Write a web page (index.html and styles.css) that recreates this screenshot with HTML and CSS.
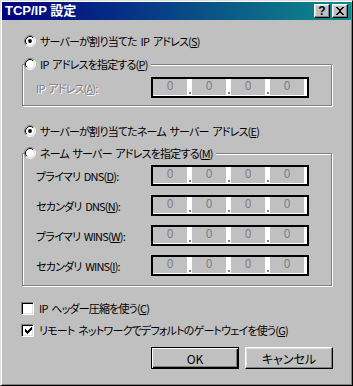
FILE: index.html
```html
<!DOCTYPE html>
<html lang="ja">
<head>
  <meta charset="UTF-8" />
  <title>TCP/IP 設定</title>
  <link rel="stylesheet" href="styles.css">
</head>
<body>
  <div class="dialog">
    <div class="titlebar">
      <span class="title">TCP/IP 設定</span>
      <div class="title-buttons">
        <span class="tbtn help">?</span>
        <span class="tbtn">
          <svg width="14" height="12" viewBox="0 0 14 12" shape-rendering="crispEdges">
            <path d="M3 2h2v1h1v1h2v-1h1v-1h2v1h-1v1h-1v1h-1v2h1v1h1v1h1v1h-2v-1h-1v-1h-2v1h-1v1h-2v-1h1v-1h1v-1h1v-2h-1v-1h-1v-1h-1z" fill="#000"/>
          </svg>
        </span>
      </div>
    </div>

    <div class="content">
      <div class="option">
        <svg class="radio" width="12" height="12" viewBox="0 0 12 12">
          <circle cx="6" cy="6" r="5" fill="#fff"/>
          <path d="M2.11 9.89A5.5 5.5 0 0 1 9.89 2.11" fill="none" stroke="#808080"/>
          <path d="M9.89 2.11A5.5 5.5 0 0 1 2.11 9.89" fill="none" stroke="#fff"/>
          <path d="M2.82 9.18A4.5 4.5 0 0 1 9.18 2.82" fill="none" stroke="#000"/>
          <path d="M9.18 2.82A4.5 4.5 0 0 1 2.82 9.18" fill="none" stroke="#dfdfdf"/>
          <circle cx="6" cy="6" r="1.9" fill="#000"/>
        </svg>
        <span>サーバーが割り当てた IP アドレス(<u>S</u>)</span>
      </div>

      <fieldset class="group group-ip">
        <legend class="option">
          <svg class="radio" width="12" height="12" viewBox="0 0 12 12">
            <circle cx="6" cy="6" r="5" fill="#fff"/>
            <path d="M2.11 9.89A5.5 5.5 0 0 1 9.89 2.11" fill="none" stroke="#808080"/>
            <path d="M9.89 2.11A5.5 5.5 0 0 1 2.11 9.89" fill="none" stroke="#fff"/>
            <path d="M2.82 9.18A4.5 4.5 0 0 1 9.18 2.82" fill="none" stroke="#000"/>
            <path d="M9.18 2.82A4.5 4.5 0 0 1 2.82 9.18" fill="none" stroke="#dfdfdf"/>
          </svg>
          <span>IP アドレスを指定する(<u>P</u>)</span>
        </legend>
        <div class="field-row">
          <span class="label disabled">IP アドレス(<u>A</u>):</span>
          <div class="ipbox"><span class="seg">0</span><span class="dot"></span><span class="seg">0</span><span class="dot"></span><span class="seg">0</span><span class="dot"></span><span class="seg">0</span></div>
        </div>
      </fieldset>

      <div class="option option-dns">
        <svg class="radio" width="12" height="12" viewBox="0 0 12 12">
          <circle cx="6" cy="6" r="5" fill="#fff"/>
          <path d="M2.11 9.89A5.5 5.5 0 0 1 9.89 2.11" fill="none" stroke="#808080"/>
          <path d="M9.89 2.11A5.5 5.5 0 0 1 2.11 9.89" fill="none" stroke="#fff"/>
          <path d="M2.82 9.18A4.5 4.5 0 0 1 9.18 2.82" fill="none" stroke="#000"/>
          <path d="M9.18 2.82A4.5 4.5 0 0 1 2.82 9.18" fill="none" stroke="#dfdfdf"/>
          <circle cx="6" cy="6" r="1.9" fill="#000"/>
        </svg>
        <span>サーバーが割り当てたネーム サーバー アドレス(<u>E</u>)</span>
      </div>

      <fieldset class="group group-dns">
        <legend class="option">
          <svg class="radio" width="12" height="12" viewBox="0 0 12 12">
            <circle cx="6" cy="6" r="5" fill="#fff"/>
            <path d="M2.11 9.89A5.5 5.5 0 0 1 9.89 2.11" fill="none" stroke="#808080"/>
            <path d="M9.89 2.11A5.5 5.5 0 0 1 2.11 9.89" fill="none" stroke="#fff"/>
            <path d="M2.82 9.18A4.5 4.5 0 0 1 9.18 2.82" fill="none" stroke="#000"/>
            <path d="M9.18 2.82A4.5 4.5 0 0 1 2.82 9.18" fill="none" stroke="#dfdfdf"/>
          </svg>
          <span>ネーム サーバー アドレスを指定する(<u>M</u>)</span>
        </legend>
        <div class="field-row">
          <span class="label">プライマリ DNS(<u>D</u>):</span>
          <div class="ipbox"><span class="seg">0</span><span class="dot"></span><span class="seg">0</span><span class="dot"></span><span class="seg">0</span><span class="dot"></span><span class="seg">0</span></div>
        </div>
        <div class="field-row">
          <span class="label">セカンダリ DNS(<u>N</u>):</span>
          <div class="ipbox"><span class="seg">0</span><span class="dot"></span><span class="seg">0</span><span class="dot"></span><span class="seg">0</span><span class="dot"></span><span class="seg">0</span></div>
        </div>
        <div class="field-row">
          <span class="label">プライマリ WINS(<u>W</u>):</span>
          <div class="ipbox"><span class="seg">0</span><span class="dot"></span><span class="seg">0</span><span class="dot"></span><span class="seg">0</span><span class="dot"></span><span class="seg">0</span></div>
        </div>
        <div class="field-row">
          <span class="label">セカンダリ WINS(<u>I</u>):</span>
          <div class="ipbox"><span class="seg">0</span><span class="dot"></span><span class="seg">0</span><span class="dot"></span><span class="seg">0</span><span class="dot"></span><span class="seg">0</span></div>
        </div>
      </fieldset>

      <div class="check-row first">
        <span class="checkbox"></span>
        <span>IP ヘッダー圧縮を使う(<u>C</u>)</span>
      </div>
      <div class="check-row">
        <span class="checkbox">
          <svg width="7" height="7" viewBox="0 0 7 7" shape-rendering="crispEdges">
            <path d="M0 2h1v1h1v1h1v-1h1v-1h1v-1h1v-1h1v3h-1v1h-1v1h-1v1h-1v1h-1v-1h-1v-1h-1z" fill="#000"/>
          </svg>
        </span>
        <span>リモート ネットワークでデフォルトのゲートウェイを使う(<u>G</u>)</span>
      </div>

      <div class="buttons">
        <span class="button default">OK</span>
        <span class="button">キャンセル</span>
      </div>
    </div>
  </div>
</body>
</html>
```

FILE: styles.css
```css
body {
  margin: 0;
  padding: 0;
  background-color: #c0c0c0;
  font-family: "Noto Sans CJK JP", "Liberation Sans", sans-serif;
  font-size: 12px;
  color: #000;
}

.dialog {
  width: 353px;
  height: 386px;
  box-sizing: border-box;
  background-color: #c0c0c0;
  border: 1px solid;
  border-color: #dfdfdf #000 #000 #dfdfdf;
  box-shadow: inset 1px 1px 0 #fff, inset -1px -1px 0 #808080;
  padding: 1px;
}

.titlebar {
  display: flex;
  justify-content: space-between;
  align-items: center;
  height: 18px;
  padding: 0 3px 0 3px;
  background: linear-gradient(to right, #000080, #108c8c);
}

.title {
  color: #fff;
  font-family: "Liberation Sans", "Noto Sans CJK JP", sans-serif;
  font-weight: bold;
  font-size: 13px;
  line-height: 18px;
}

.title-buttons {
  display: flex;
  gap: 2px;
}

.tbtn {
  display: flex;
  justify-content: center;
  align-items: center;
  width: 16px;
  height: 14px;
  box-sizing: border-box;
  background-color: #c0c0c0;
  border: 1px solid;
  border-color: #fff #000 #000 #fff;
  box-shadow: inset -1px -1px 0 #808080, inset 1px 1px 0 #dfdfdf;
}

.help {
  font-family: "Liberation Sans", sans-serif;
  font-weight: bold;
  font-size: 12px;
  line-height: 12px;
}

.content {
  padding: 14px 18px 0 19px;
  font-size: 11px;
  font-feature-settings: "palt";
  letter-spacing: -0.8px;
  word-spacing: 2px;
}

.option {
  display: flex;
  align-items: center;
  gap: 4px;
  height: 14px;
  line-height: 14px;
  margin-left: 3px;
  white-space: nowrap;
}

.option-dns {
  margin-top: 18px;
}

.radio {
  flex: none;
}

.group {
  width: 310px;
  box-sizing: border-box;
  margin: 9px 0 0 1px;
  padding: 0 0 7px 0;
  border: 1px solid #808080;
  box-shadow: inset 1px 1px 0 #fff, 1px 1px 0 #fff;
  min-width: 0;
}

.group legend {
  margin-left: 1px;
  padding: 0 3px 0 0;
  background-color: #c0c0c0;
}

.group-ip .field-row {
  margin-top: 6px;
}

.group-dns {
  margin-top: 8px;
  padding-bottom: 9px;
}

.group-dns .field-row {
  margin-top: 9px;
}

.group-dns .field-row:first-of-type {
  margin-top: 5px;
}

.field-row {
  display: flex;
  align-items: center;
  padding-left: 13px;
}

.label {
  width: 115px;
  flex: none;
  white-space: nowrap;
}

.disabled {
  color: #808080;
  text-shadow: 1px 1px 0 #fff;
}

.ipbox {
  display: flex;
  width: 158px;
  height: 21px;
  box-sizing: border-box;
  border: 2px solid #000;
  background-color: #fff;
  padding: 0 3px 1px 0;
  letter-spacing: 0;
}

.seg {
  width: 34px;
  background-color: #c0c0c0;
  color: #808080;
  text-align: center;
  font-size: 12px;
  line-height: 12px;
}

.dot {
  display: flex;
  justify-content: center;
  align-items: flex-end;
  width: 5px;
  padding-bottom: 1px;
  box-sizing: border-box;
}

.dot::before {
  content: "";
  width: 2px;
  height: 2px;
  background-color: #808080;
}

.check-row {
  display: flex;
  align-items: center;
  gap: 5px;
  height: 14px;
  line-height: 14px;
  margin-top: 8px;
  white-space: nowrap;
}

.check-row.first {
  margin-top: 15px;
}

.checkbox {
  display: flex;
  justify-content: center;
  align-items: center;
  width: 13px;
  height: 13px;
  box-sizing: border-box;
  background-color: #fff;
  border: 1px solid;
  border-color: #808080 #fff #fff #808080;
  box-shadow: inset 1px 1px 0 #000, inset -1px -1px 0 #dfdfdf;
  padding: 1px 0 0 1px;
}

.buttons {
  display: flex;
  justify-content: flex-end;
  gap: 6px;
  margin-top: 10px;
}

.button {
  display: flex;
  justify-content: center;
  align-items: center;
  width: 88px;
  height: 22px;
  box-sizing: border-box;
  border: 1px solid;
  border-color: #fff #000 #000 #fff;
  box-shadow: inset -1px -1px 0 #808080, inset 1px 1px 0 #dfdfdf;
  font-size: 12px;
  letter-spacing: 0;
}

.button.default {
  border-color: #000;
  box-shadow: inset 1px 1px 0 #fff, inset -1px -1px 0 #000, inset -2px -2px 0 #808080;
}
```
